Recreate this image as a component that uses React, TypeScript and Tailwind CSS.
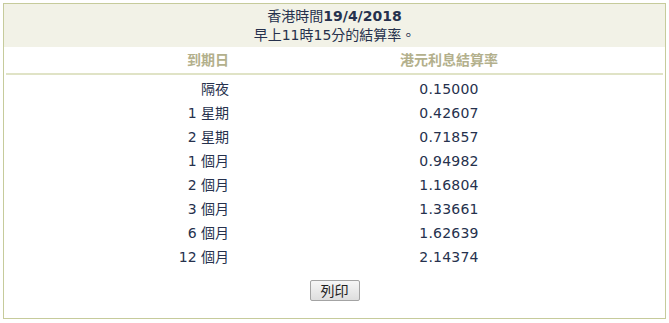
const ROWS = [
  { term: '隔夜', rate: '0.15000' },
  { term: '1 星期', rate: '0.42607' },
  { term: '2 星期', rate: '0.71857' },
  { term: '1 個月', rate: '0.94982' },
  { term: '2 個月', rate: '1.16804' },
  { term: '3 個月', rate: '1.33661' },
  { term: '6 個月', rate: '1.62639' },
  { term: '12 個月', rate: '2.14374' },
];

export default function App() {
  return (
    <div className="h-[323px] w-[669px] bg-white p-[3px] text-[14px] text-[#26314d]" style={{ fontFamily: '"DejaVu Sans", "Noto Sans CJK TC", sans-serif' }}>
      <div className="h-[316px] border border-[#c6cb9b]">
        <div className="flex h-[43px] flex-col items-center justify-center bg-[#f2f2e7] leading-[19px]">
          <div>香港時間<span className="font-bold">19/4/2018</span></div>
          <div>早上11時15分的結算率。</div>
        </div>

        <div className="mx-[2px] grid h-[28px] grid-cols-[54px_200px] items-center gap-x-[120px] border-b-2 border-[#e0e3c6] pl-[169px] font-bold text-[#b3b08c]">
          <div className="text-right whitespace-nowrap">到期日</div>
          <div className="text-center whitespace-nowrap">港元利息結算率</div>
        </div>

        <div className="pt-[2px]">
          {ROWS.map((row) => (
            <div key={row.term} className="grid h-[24px] grid-cols-[54px_200px] items-center gap-x-[120px] pl-[171px]">
              <div className="text-right whitespace-nowrap">{row.term}</div>
              <div className="text-center tracking-[0.2px]">{row.rate}</div>
            </div>
          ))}
        </div>

        <div className="mt-[11px] flex justify-center">
          <button className="h-[21px] w-[50px] rounded-[2px] border border-[#a3a3a3] bg-gradient-to-b from-[#f6f6f6] to-[#dedede] text-[14px] leading-none text-[#222]">
            列印
          </button>
        </div>
      </div>
    </div>
  );
}
